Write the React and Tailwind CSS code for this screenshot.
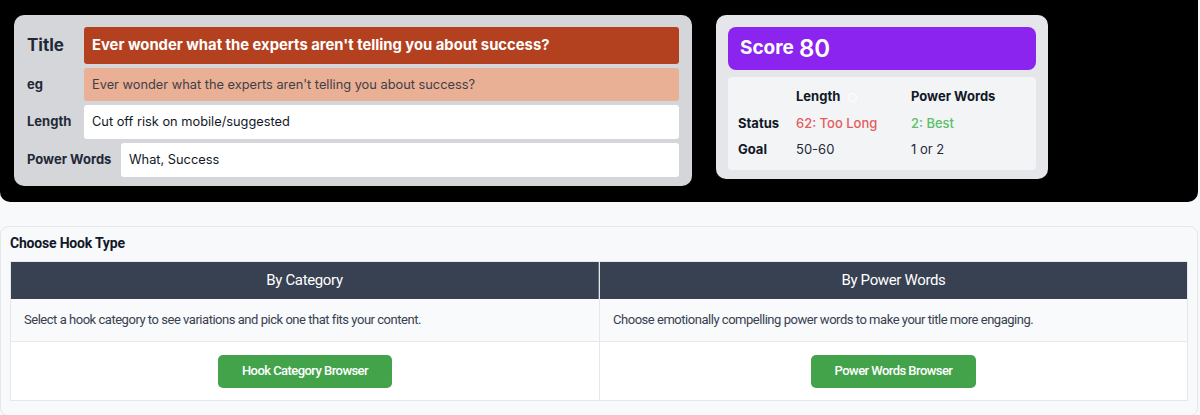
import React from 'react';

function FieldRow({ label, labelClass, fieldClass, children }) {
  return (
    <div className="flex items-stretch">
      <div className={`flex items-center shrink-0 font-bold text-[#1f2937] ${labelClass}`}>{label}</div>
      <div className={`flex-1 flex items-center px-[8px] rounded-[3px] ${fieldClass}`}>{children}</div>
    </div>
  );
}

function TitlePanel() {
  return (
    <div className="w-[678px] bg-[#d4d6da] rounded-[10px] pt-[12px] pb-[9px] px-[13px] flex flex-col gap-[4px]">
      <FieldRow label="Title" labelClass="w-[57px] text-[17px]" fieldClass="h-[37px] bg-[#b3411f] text-white font-bold text-[14.8px]">
        Ever wonder what the experts aren't telling you about success?
      </FieldRow>
      <FieldRow label="eg" labelClass="w-[57px] text-[13px]" fieldClass="h-[33px] bg-[#eab095] text-[#3f3f46] text-[12.8px]">
        Ever wonder what the experts aren't telling you about success?
      </FieldRow>
      <FieldRow label="Length" labelClass="w-[57px] text-[13px]" fieldClass="h-[34px] bg-white text-[#111827] text-[12.8px]">
        Cut off risk on mobile/suggested
      </FieldRow>
      <FieldRow label="Power Words" labelClass="w-[94px] text-[13px]" fieldClass="h-[34px] bg-white text-[#111827] text-[12.8px]">
        What, Success
      </FieldRow>
    </div>
  );
}

function ScorePanel() {
  return (
    <div className="w-[332px] bg-[#e5e6e9] rounded-[10px] p-[12px] pb-[9px] flex flex-col gap-[7px]">
      <div className="h-[43px] bg-[#8b24ef] rounded-[8px] flex items-center px-[12px] gap-[5px] text-white">
        <span className="font-bold text-[19px]">Score</span>
        <span className="font-semibold text-[24px]">80</span>
      </div>
      <div className="bg-[#f3f4f6] rounded-[4px] px-[10px] pt-[7px] pb-[7px] text-[13px]">
        <div className="flex h-[26px] items-center font-bold text-[#111827]">
          <div className="w-[58px]"></div>
          <div className="w-[115px] flex items-center gap-[8px]">
            Length
            <span className="w-[9px] h-[9px] rounded-full border border-white"></span>
          </div>
          <div>Power Words</div>
        </div>
        <div className="flex h-[27px] items-center">
          <div className="w-[58px] font-bold text-[#111827]">Status</div>
          <div className="w-[115px] font-medium text-[#e35d5d]">62: Too Long</div>
          <div className="font-medium text-[#5cbf6a]">2: Best</div>
        </div>
        <div className="flex h-[26px] items-center text-[#1f2937]">
          <div className="w-[58px] font-bold text-[#111827]">Goal</div>
          <div className="w-[115px]">50-60</div>
          <div>1 or 2</div>
        </div>
      </div>
    </div>
  );
}

function HookColumn({ title, text, button, last }) {
  return (
    <div className={`flex flex-col ${last ? '' : 'border-r border-[#e5e7eb]'}`}>
      <div className={`h-[37px] bg-[#374151] text-white text-[15px] tracking-[-0.35px] flex items-center justify-center ${last ? '' : 'border-r border-[#6b7280]'}`}>
        {title}
      </div>
      <div className="h-[43px] bg-[#f9fafb] border-b border-[#e5e7eb] flex items-center px-[13px] text-[13px] tracking-[-0.47px] text-[#374151]">
        {text}
      </div>
      <div className="h-[58px] bg-white flex items-center justify-center">
        <button className="h-[33px] px-[24px] bg-[#43a34b] rounded-[5px] text-white text-[13px] font-medium tracking-[-0.55px]">
          {button}
        </button>
      </div>
    </div>
  );
}

export default function App() {
  return (
    <div className="min-h-screen bg-[#f8f9fb] font-['Inter',sans-serif]">
      <div className="h-[202px] bg-black rounded-b-[10px] mr-[2px] flex items-start gap-[24px] pt-[15px] pl-[14px]">
        <TitlePanel />
        <ScorePanel />
      </div>
      <div className="mt-[24px] border border-[#e5e7eb] rounded-[8px] bg-[#f8f9fb] px-[9px] pt-[5px] pb-[14px] mr-[2px] font-['Roboto',sans-serif]">
        <h2 className="text-[14px] font-bold tracking-[-0.2px] text-[#111827] h-[22px] flex items-center mb-[7px]">Choose Hook Type</h2>
        <div className="grid grid-cols-[589px_1fr] border border-[#e5e7eb]">
          <HookColumn
            title="By Category"
            text="Select a hook category to see variations and pick one that fits your content."
            button="Hook Category Browser"
          />
          <HookColumn
            title="By Power Words"
            text="Choose emotionally compelling power words to make your title more engaging."
            button="Power Words Browser"
            last
          />
        </div>
      </div>
    </div>
  );
}
